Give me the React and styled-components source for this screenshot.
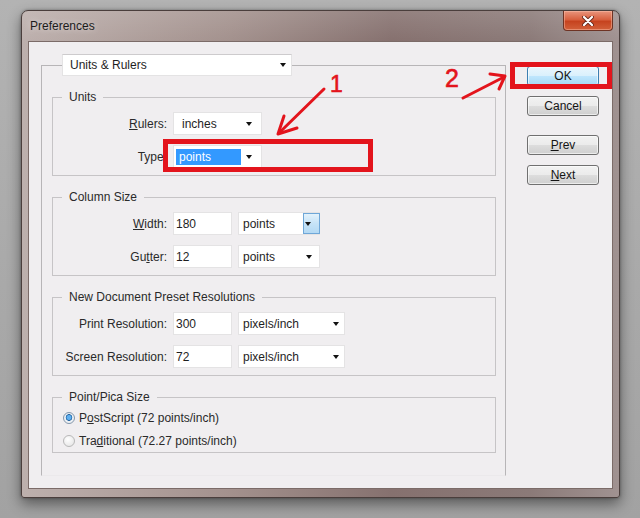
import React from "react";
import styled, { createGlobalStyle } from "styled-components";

const GlobalStyle = createGlobalStyle`
  html, body {
    margin: 0;
    padding: 0;
  }
  body {
    width: 640px;
    height: 518px;
    overflow: hidden;
    background: #a8a8a8;
    font-family: "Liberation Sans", Arial, sans-serif;
    font-size: 12px;
    color: #222;
  }
`;

const Page = styled.div`
  position: relative;
  width: 640px;
  height: 518px;
  box-sizing: border-box;
  padding: 10px 0 0 21px;
  background: linear-gradient(180deg, #b3b3b3 0%, #a9a9a9 55%, #a2a2a2 100%);
`;

const Window = styled.div`
  width: 599px;
  height: 488px;
  box-sizing: border-box;
  display: flex;
  flex-direction: column;
  padding: 0 6px 8px 6px;
  border: 1px solid #4a3e3c;
  border-radius: 7px 7px 3px 3px;
  background:
    linear-gradient(180deg, rgba(255, 255, 255, 0.12), rgba(255, 255, 255, 0) 30px),
    linear-gradient(90deg, #bdb0ad 0%, #a3918d 35%, #86716f 62%, #8b7a78 85%, #a09291 100%);
  box-shadow: 0 6px 14px rgba(0, 0, 0, 0.45), 0 0 3px rgba(0, 0, 0, 0.35);
`;

const TitleBar = styled.div`
  height: 30px;
  display: flex;
  align-items: flex-start;
  justify-content: space-between;
  padding-left: 2px;
`;

const Title = styled.span`
  line-height: 30px;
  font-size: 12px;
  color: #1c1c1c;
  text-shadow: 0 0 6px rgba(255, 255, 255, 0.6);
`;

const CloseButton = styled.div`
  width: 48px;
  height: 19px;
  display: flex;
  align-items: center;
  justify-content: center;
  border: 1px solid #6e3324;
  border-top: none;
  border-radius: 0 0 4px 4px;
  background: linear-gradient(180deg, #e9957d 0%, #d8603f 45%, #c6431f 55%, #d2603a 100%);
  box-shadow: inset 0 0 0 1px rgba(255, 200, 180, 0.45);
`;

const Body = styled.div`
  flex: 1;
  display: flex;
  align-items: flex-start;
  padding: 12px 13px 0 12px;
  background: #f0eef0;
  border: 1px solid #7b6b68;
`;

const OuterGroup = styled.fieldset`
  box-sizing: border-box;
  width: 465px;
  height: 422px;
  margin: 0;
  padding: 14px 9px 0 10px;
  min-width: 0;
  border: 1px solid #b7b5b7;
  border-bottom-color: #ebe9eb;
  display: flex;
  flex-direction: column;
  gap: 14px;
`;

const OuterLegend = styled.legend`
  margin-left: 10px;
  padding: 0;
`;

const Group = styled.fieldset`
  margin: 0;
  min-width: 0;
  border: 1px solid #c6c4c6;
  padding: ${(p) => p.$pad || "8px 10px 7px 10px"};
  display: flex;
  flex-direction: column;
  gap: ${(p) => p.$gap || "10px"};
`;

const Legend = styled.legend`
  margin-left: -1px;
  padding: 0 7px;
  line-height: 14px;
  color: #2a2a2a;
`;

const Row = styled.div`
  display: flex;
  align-items: center;
  gap: 6px;
  height: 23px;
`;

const Label = styled.span`
  width: 104px;
  flex: none;
  text-align: right;
  color: #2a2a2a;
  white-space: nowrap;
`;

const U = styled.span`
  text-decoration: underline;
  text-underline-offset: 1px;
`;

const TextBox = styled.div`
  box-sizing: border-box;
  width: ${(p) => p.$w}px;
  height: ${(p) => p.$h || 23}px;
  padding-left: 2px;
  display: flex;
  align-items: center;
  background: #fff;
  border: 1px solid #e4e3e4;
  color: #1e1e1e;
`;

const Select = styled.div`
  box-sizing: border-box;
  width: ${(p) => p.$w}px;
  height: ${(p) => p.$h || 23}px;
  padding-left: ${(p) => p.$pl || 4}px;
  display: flex;
  align-items: center;
  background: #fff;
  border: 1px solid #e4e3e4;
  border-top-color: ${(p) => (p.$top ? "#cdcbcd" : "#e4e3e4")};
  color: #1e1e1e;
  white-space: nowrap;
`;

const SelectText = styled.span`
  flex: 1;
`;

const Highlight = styled.span`
  display: inline-block;
  width: 62px;
  height: 16px;
  line-height: 16px;
  padding-left: 3px;
  background: #3399ff;
  color: #fff;
`;

const Caret = styled.span`
  width: 0;
  height: 0;
  flex: none;
  margin-right: ${(p) => p.$mr || 8}px;
  border-left: 3.5px solid transparent;
  border-right: 3.5px solid transparent;
  border-top: 4px solid #111;
`;

const DropButton = styled.div`
  box-sizing: border-box;
  width: 17px;
  height: 100%;
  flex: none;
  display: flex;
  align-items: center;
  justify-content: center;
  margin-right: -1px;
  border: 1px solid #6fa7d8;
  background: linear-gradient(180deg, #e3f2fc 0%, #c6e3f7 50%, #b3d9f4 100%);
`;

const RadioRow = styled.div`
  display: flex;
  align-items: center;
  gap: 4px;
  height: 22px;
  color: #2a2a2a;
`;

const Radio = styled.span`
  box-sizing: border-box;
  width: 12px;
  height: 12px;
  border-radius: 50%;
  flex: none;
  border: 1px solid ${(p) => (p.$on ? "#8497ab" : "#b8b8b8")};
  background: ${(p) =>
    p.$on
      ? "radial-gradient(circle at 50% 45%, #5fb0f0 0 2px, #1c5f9e 3px, #e9eef3 3.6px, #f7f7f7 100%)"
      : "radial-gradient(circle at 40% 35%, #ffffff 0, #e1e1e1 100%)"};
`;

const ButtonColumn = styled.div`
  width: 72px;
  margin-left: 21px;
  padding-top: 12px;
  display: flex;
  flex-direction: column;
`;

const Button = styled.div`
  box-sizing: border-box;
  height: 20px;
  margin-top: ${(p) => p.$mt || 0}px;
  display: flex;
  align-items: center;
  justify-content: center;
  border: 1px solid ${(p) => (p.$primary ? "#3c7fb1" : "#707070")};
  border-radius: 3px;
  color: #151515;
  background: ${(p) =>
    p.$primary
      ? "linear-gradient(180deg, #eaf6fd 0%, #d9f0fc 50%, #bee6fd 51%, #a7d9f5 100%)"
      : "linear-gradient(180deg, #f2f2f2 0%, #ebebeb 50%, #dddddd 51%, #cfcfcf 100%)"};
  box-shadow: inset 0 0 0 1px rgba(255, 255, 255, 0.6);
`;

const Overlay = styled.svg`
  position: absolute;
  left: 0;
  top: 0;
  pointer-events: none;
`;

const Marker = styled.span`
  position: absolute;
  left: ${(p) => p.$x}px;
  top: ${(p) => p.$y}px;
  font-family: "Liberation Sans", Arial, sans-serif;
  font-size: ${(p) => p.$size}px;
  line-height: 1;
  color: #e3141c;
  -webkit-text-stroke: 0.6px #e3141c;
`;

const RED = "#e3141c";

export default function App() {
  return (
    <>
      <GlobalStyle />
      <Page>
        <Window>
          <TitleBar>
            <Title>Preferences</Title>
            <CloseButton>
              <svg width="12" height="10" viewBox="0 0 12 10">
                <path d="M2 1 L10 9 M10 1 L2 9" stroke="#6a2a1c" strokeWidth="4" strokeLinecap="round" />
                <path d="M2 1 L10 9 M10 1 L2 9" stroke="#ffffff" strokeWidth="2.2" strokeLinecap="round" />
              </svg>
            </CloseButton>
          </TitleBar>
          <Body>
            <OuterGroup>
              <OuterLegend>
                <Select $w={230} $h={22} $pl={7} $top>
                  <SelectText>Units &amp; Rulers</SelectText>
                  <Caret $mr={5} />
                </Select>
              </OuterLegend>

              <Group>
                <Legend>Units</Legend>
                <Row>
                  <Label>
                    <U>R</U>ulers:
                  </Label>
                  <Select $w={89} $pl={8}>
                    <SelectText>inches</SelectText>
                    <Caret $mr={9} />
                  </Select>
                </Row>
                <Row>
                  <Label>Type:</Label>
                  <Select $w={89} $pl={2}>
                    <SelectText>
                      <Highlight>points</Highlight>
                    </SelectText>
                    <Caret $mr={9} />
                  </Select>
                </Row>
              </Group>

              <Group>
                <Legend>Column Size</Legend>
                <Row>
                  <Label>
                    <U>W</U>idth:
                  </Label>
                  <TextBox $w={59}>180</TextBox>
                  <Select $w={82}>
                    <SelectText>points</SelectText>
                    <DropButton>
                      <Caret $mr={0} />
                    </DropButton>
                  </Select>
                </Row>
                <Row>
                  <Label>
                    Gu<U>t</U>ter:
                  </Label>
                  <TextBox $w={59}>12</TextBox>
                  <Select $w={82}>
                    <SelectText>points</SelectText>
                    <Caret $mr={7} />
                  </Select>
                </Row>
              </Group>

              <Group>
                <Legend>New Document Preset Resolutions</Legend>
                <Row>
                  <Label>Print Resolution:</Label>
                  <TextBox $w={59}>300</TextBox>
                  <Select $w={107}>
                    <SelectText>pixels/inch</SelectText>
                    <Caret $mr={5} />
                  </Select>
                </Row>
                <Row>
                  <Label>Screen Resolution:</Label>
                  <TextBox $w={59}>72</TextBox>
                  <Select $w={107}>
                    <SelectText>pixels/inch</SelectText>
                    <Caret $mr={5} />
                  </Select>
                </Row>
              </Group>

              <Group $pad="3px 10px 0 10px" $gap="1px">
                <Legend>Point/Pica Size</Legend>
                <RadioRow>
                  <Radio $on />
                  <span>
                    P<U>o</U>stScript (72 points/inch)
                  </span>
                </RadioRow>
                <RadioRow>
                  <Radio />
                  <span>
                    Tra<U>d</U>itional (72.27 points/inch)
                  </span>
                </RadioRow>
              </Group>
            </OuterGroup>

            <ButtonColumn>
              <Button $primary>OK</Button>
              <Button $mt={10}>Cancel</Button>
              <Button $mt={19}>
                <span>
                  <U>P</U>rev
                </span>
              </Button>
              <Button $mt={10}>
                <span>
                  <U>N</U>ext
                </span>
              </Button>
            </ButtonColumn>
          </Body>
        </Window>

        <Overlay width="640" height="518" viewBox="0 0 640 518">
          <rect x="165.5" y="141.5" width="205" height="28" fill="none" stroke={RED} strokeWidth="5" />
          <rect x="512.5" y="64.5" width="97" height="22" fill="none" stroke={RED} strokeWidth="5" />
          <path d="M324 89 L279 133" stroke={RED} strokeWidth="3" fill="none" strokeLinecap="round" />
          <path d="M284 116 L278 134 L297 128" stroke={RED} strokeWidth="3" fill="none" strokeLinecap="round" strokeLinejoin="round" />
          <path d="M463 98 L504 77" stroke={RED} strokeWidth="3" fill="none" strokeLinecap="round" />
          <path d="M490 74 L505 76 L499 89" stroke={RED} strokeWidth="3" fill="none" strokeLinecap="round" strokeLinejoin="round" />
        </Overlay>
        <Marker $x={330} $y={73} $size={23}>1</Marker>
        <Marker $x={445} $y={66} $size={25}>2</Marker>
      </Page>
    </>
  );
}
